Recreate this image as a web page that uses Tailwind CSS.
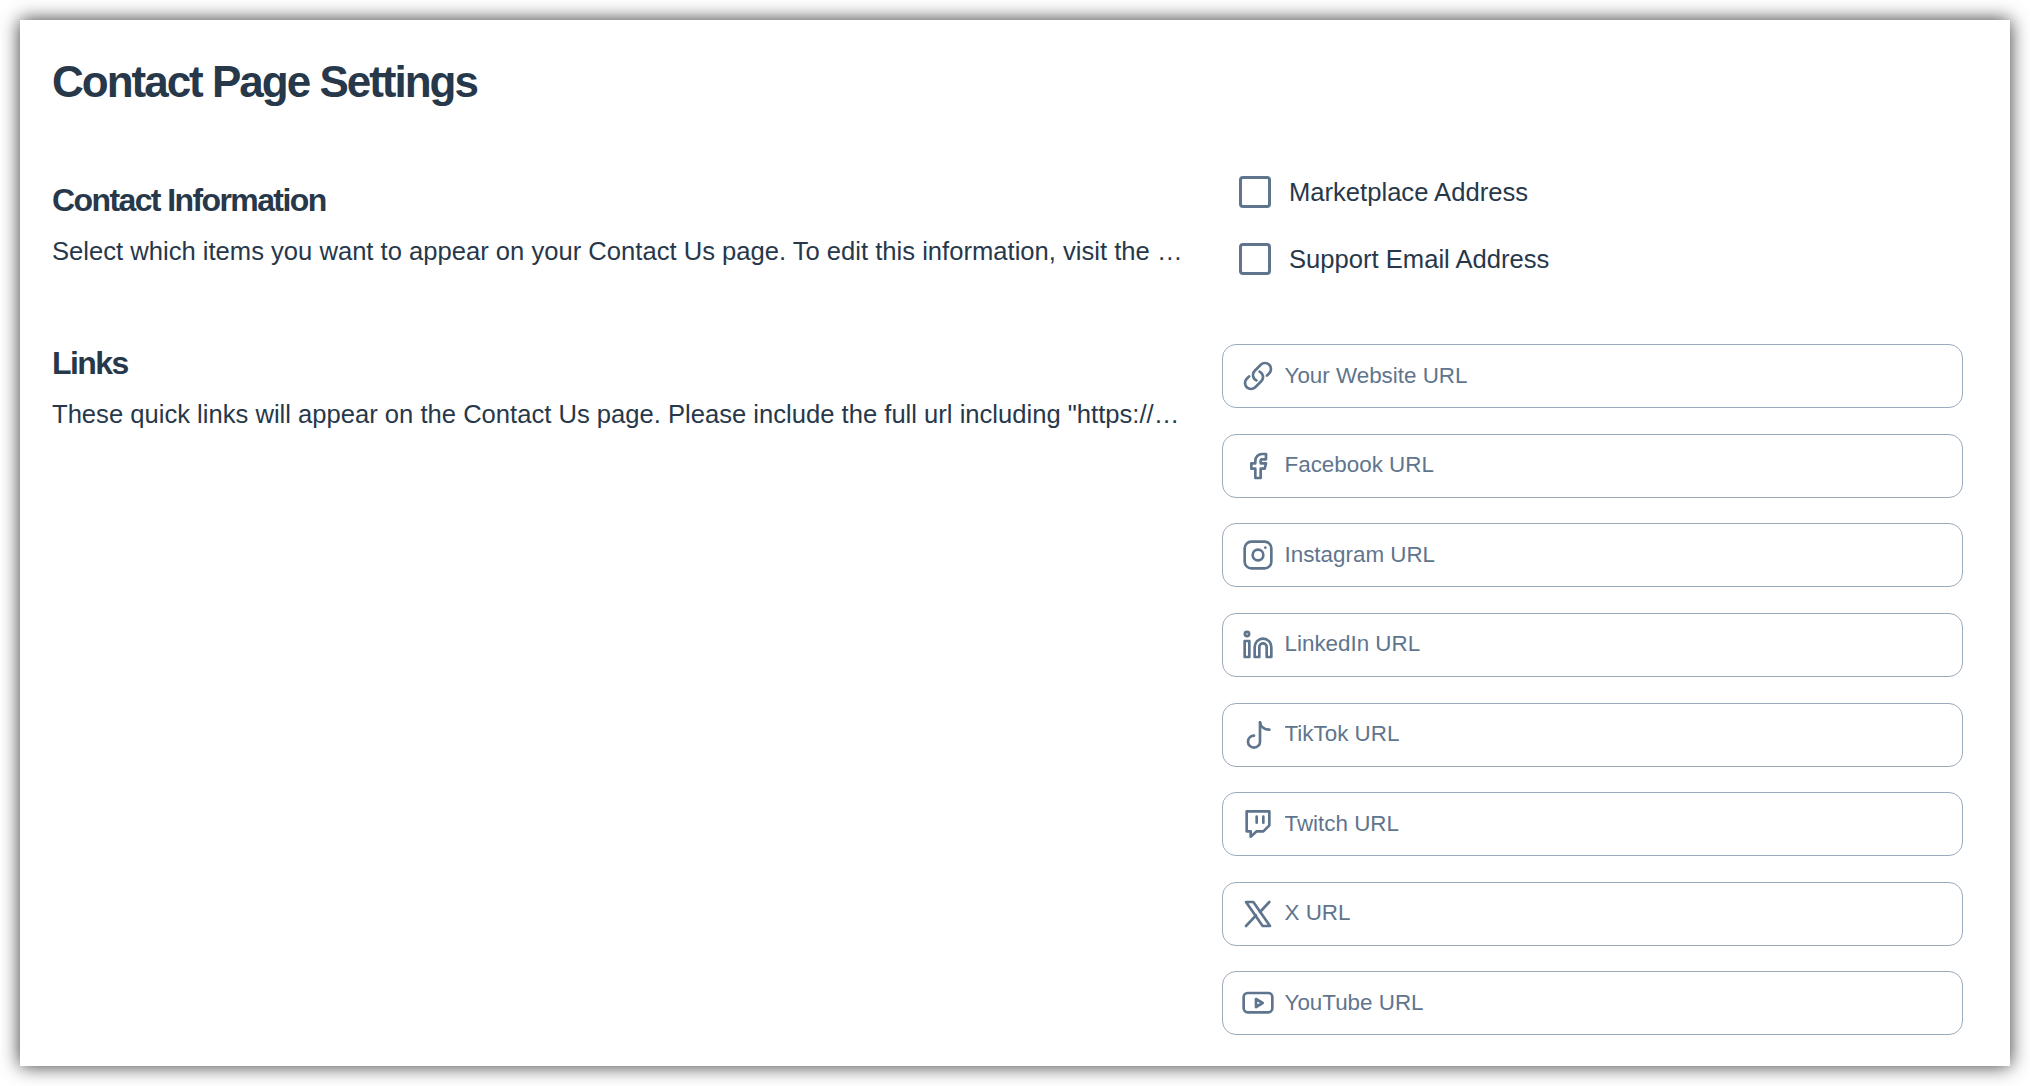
<!DOCTYPE html>
<html lang="en">
<head>
  <meta charset="UTF-8">
  <title>Contact Page Settings</title>
  <script src="https://cdn.jsdelivr.net/npm/@tailwindcss/browser@4"></script>
</head>
<body class="bg-white h-[1086px] overflow-hidden font-['Liberation_Sans',Arial,sans-serif] text-[#27384a]">
  <main class="mx-[20px] mt-[20px] h-[1046px] bg-white shadow-[0_0_18px_rgba(0,0,0,0.8)] pl-[32px] pr-[47px]">
    <h1 class="pt-[37px] h-[156px] text-[44px] leading-[50px] font-bold tracking-[-2px]">Contact Page Settings</h1>

    <section class="grid grid-cols-[1134px_741px] gap-x-[36px] h-[168.2px]">
      <div class="min-w-0 pt-[4px]">
        <h2 class="text-[32px] leading-[40px] font-bold tracking-[-1.6px]">Contact Information</h2>
        <p class="mt-[15px] text-[25.6px] leading-[32px] truncate">Select which items you want to appear on your Contact Us page. To edit this information, visit the Marketplace Settings page.</p>
      </div>
      <div class="flex flex-col gap-[35px] pl-[17px]">
        <label class="flex items-center gap-[18px] text-[25.6px] leading-[32px]">
          <input type="checkbox" class="appearance-none size-[32px] border-[3px] border-[#5f758d] rounded-[4px] bg-white">
          Marketplace Address
        </label>
        <label class="flex items-center gap-[18px] text-[25.6px] leading-[32px]">
          <input type="checkbox" class="appearance-none size-[32px] border-[3px] border-[#5f758d] rounded-[4px] bg-white">
          Support Email Address
        </label>
      </div>
    </section>

    <section class="grid grid-cols-[1134px_741px] gap-x-[36px]">
      <div class="min-w-0">
        <h2 class="text-[32px] leading-[38px] font-bold tracking-[-1.6px]">Links</h2>
        <p class="mt-[16px] text-[25.6px] leading-[32px] truncate">These quick links will appear on the Contact Us page. Please include the full url including "https://" for each of the links below.</p>
      </div>
      <div class="flex flex-col gap-[25.6px]">
        <div class="relative">
          <svg class="absolute left-[20px] top-[16px] size-[32px] text-[#5f758d]" viewBox="0 0 24 24" fill="none" stroke="currentColor" stroke-width="2" stroke-linecap="round" stroke-linejoin="round"><path d="M13.19 8.688a4.5 4.5 0 0 1 1.242 7.244l-4.5 4.5a4.5 4.5 0 0 1-6.364-6.364l1.757-1.757m13.35-.622 1.757-1.757a4.5 4.5 0 0 0-6.364-6.364l-4.5 4.5a4.5 4.5 0 0 0 1.242 7.244"/></svg>
          <input type="text" placeholder="Your Website URL" class="w-full h-[64px] pl-[61.5px] pr-4 pb-[1px] border border-[#9aabbb] rounded-[14px] text-[22.4px] placeholder:text-[#5f758d] outline-none">
        </div>
        <div class="relative">
          <svg class="absolute left-[20px] top-[16px] size-[32px] text-[#5f758d]" viewBox="0 0 24 24" fill="none" stroke="currentColor" stroke-width="2" stroke-linecap="round" stroke-linejoin="round"><path d="M7 10v4h3v7h4v-7h3l1 -4h-4v-2a1 1 0 0 1 1 -1h3v-4h-3a5 5 0 0 0 -5 5v2h-3"/></svg>
          <input type="text" placeholder="Facebook URL" class="w-full h-[64px] pl-[61.5px] pr-4 pb-[1px] border border-[#9aabbb] rounded-[14px] text-[22.4px] placeholder:text-[#5f758d] outline-none">
        </div>
        <div class="relative">
          <svg class="absolute left-[20px] top-[16px] size-[32px] text-[#5f758d]" viewBox="0 0 24 24" fill="none" stroke="currentColor" stroke-width="2" stroke-linecap="round" stroke-linejoin="round"><rect x="2" y="2" width="20" height="20" rx="5"/><circle cx="12" cy="12" r="4"/><path d="M17.5 6.5v.01"/></svg>
          <input type="text" placeholder="Instagram URL" class="w-full h-[64px] pl-[61.5px] pr-4 pb-[1px] border border-[#9aabbb] rounded-[14px] text-[22.4px] placeholder:text-[#5f758d] outline-none">
        </div>
        <div class="relative">
          <svg class="absolute left-[20px] top-[16px] size-[32px] text-[#5f758d]" viewBox="0 0 24 24" fill="none" stroke="currentColor" stroke-width="2" stroke-linecap="round" stroke-linejoin="round"><path d="M2 9h3.5v12H2z"/><circle cx="3.75" cy="3.75" r="1.6"/><path d="M9.5 21v-7.5a6.25 6.25 0 0 1 12.5 0V21h-3.5v-7.5a2.75 2.75 0 0 0-5.5 0V21z"/></svg>
          <input type="text" placeholder="LinkedIn URL" class="w-full h-[64px] pl-[61.5px] pr-4 pb-[1px] border border-[#9aabbb] rounded-[14px] text-[22.4px] placeholder:text-[#5f758d] outline-none">
        </div>
        <div class="relative">
          <svg class="absolute left-[20px] top-[16px] size-[32px] text-[#5f758d]" viewBox="0 0 24 24" fill="none" stroke="currentColor" stroke-width="2" stroke-linecap="round" stroke-linejoin="round"><path d="M13.5 2.5V17a4.5 4.5 0 1 1-4.5-4.5"/><path d="M13.5 2.5c.3 2.8 3 5.5 7 5.5"/></svg>
          <input type="text" placeholder="TikTok URL" class="w-full h-[64px] pl-[61.5px] pr-4 pb-[1px] border border-[#9aabbb] rounded-[14px] text-[22.4px] placeholder:text-[#5f758d] outline-none">
        </div>
        <div class="relative">
          <svg class="absolute left-[20px] top-[16px] size-[32px] text-[#5f758d]" viewBox="0 0 24 24" fill="none" stroke="currentColor" stroke-width="2" stroke-linecap="round" stroke-linejoin="round"><path d="M3.5 2.5h17V13L16 17.5h-5l-4.5 4v-4h-3z"/><path d="M11 6.5V11"/><path d="M16 6.5V11"/></svg>
          <input type="text" placeholder="Twitch URL" class="w-full h-[64px] pl-[61.5px] pr-4 pb-[1px] border border-[#9aabbb] rounded-[14px] text-[22.4px] placeholder:text-[#5f758d] outline-none">
        </div>
        <div class="relative">
          <svg class="absolute left-[20px] top-[16px] size-[32px] text-[#5f758d]" viewBox="0 0 24 24" fill="none" stroke="currentColor" stroke-width="2" stroke-linecap="round" stroke-linejoin="round"><path d="M3 3h5.5L21 21h-5.5z"/><path d="M20.5 3l-7 7.5"/><path d="M3 21l7.5-8"/></svg>
          <input type="text" placeholder="X URL" class="w-full h-[64px] pl-[61.5px] pr-4 pb-[1px] border border-[#9aabbb] rounded-[14px] text-[22.4px] placeholder:text-[#5f758d] outline-none">
        </div>
        <div class="relative">
          <svg class="absolute left-[20px] top-[16px] size-[32px] text-[#5f758d]" viewBox="0 0 24 24" fill="none" stroke="currentColor" stroke-width="2" stroke-linecap="round" stroke-linejoin="round"><rect x="1.25" y="4.5" width="21.5" height="14.5" rx="3"/><path d="M10.5 9l5 3l-5 3z"/></svg>
          <input type="text" placeholder="YouTube URL" class="w-full h-[64px] pl-[61.5px] pr-4 pb-[1px] border border-[#9aabbb] rounded-[14px] text-[22.4px] placeholder:text-[#5f758d] outline-none">
        </div>
      </div>
    </section>
  </main>
</body>
</html>
